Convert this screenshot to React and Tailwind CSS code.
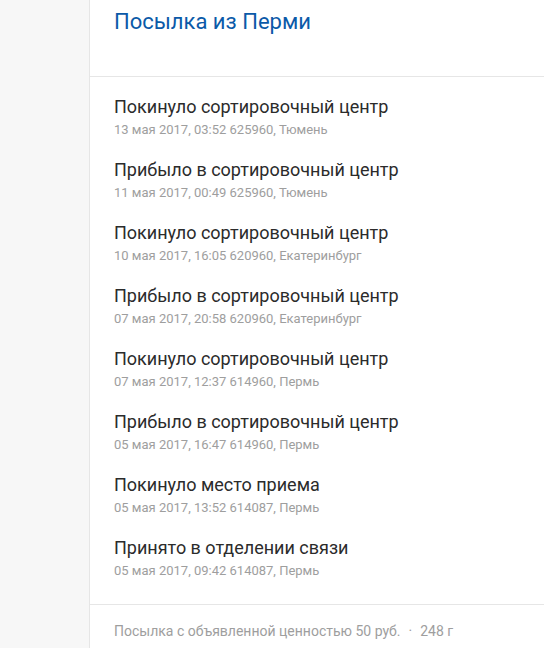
import React from "react";

const items = [
  ["Покинуло сортировочный центр", "13 мая 2017, 03:52 625960, Тюмень"],
  ["Прибыло в сортировочный центр", "11 мая 2017, 00:49 625960, Тюмень"],
  ["Покинуло сортировочный центр", "10 мая 2017, 16:05 620960, Екатеринбург"],
  ["Прибыло в сортировочный центр", "07 мая 2017, 20:58 620960, Екатеринбург"],
  ["Покинуло сортировочный центр", "07 мая 2017, 12:37 614960, Пермь"],
  ["Прибыло в сортировочный центр", "05 мая 2017, 16:47 614960, Пермь"],
  ["Покинуло место приема", "05 мая 2017, 13:52 614087, Пермь"],
  ["Принято в отделении связи", "05 мая 2017, 09:42 614087, Пермь"],
];

export default function App() {
  return (
    <div className="flex h-[648px] w-[544px] overflow-hidden bg-[#f7f7f7] font-['Roboto',sans-serif]">
      <div className="w-[89px] shrink-0" />
      <div className="flex flex-1 flex-col border-l border-[#e6e6e6] bg-white">
        <div className="h-[77px] shrink-0 border-b border-[#e6e6e6] px-6 pt-[8px]">
          <h1 className="text-[22px] leading-[28px] font-normal text-[#0b5aa8]">Посылка из Перми</h1>
        </div>
        <div className="flex flex-col gap-[20.5px] px-6 pt-[19px] pb-[24px]">
          {items.map(([t, s], i) => (
            <div key={i} className="flex flex-col gap-[2.5px]">
              <div className="text-[18px] leading-[22px] text-[#2b2b2b]">{t}</div>
              <div className="text-[13px] leading-[18px] text-[#9e9e9e]">{s}</div>
            </div>
          ))}
        </div>
        <div className="border-t border-[#e6e6e6] px-6 pt-[16px] text-[14px] leading-[20px] text-[#9e9e9e]">
          Посылка с объявленной ценностью 50 руб.<span className="mx-[8px]">·</span>248 г
        </div>
      </div>
    </div>
  );
}
